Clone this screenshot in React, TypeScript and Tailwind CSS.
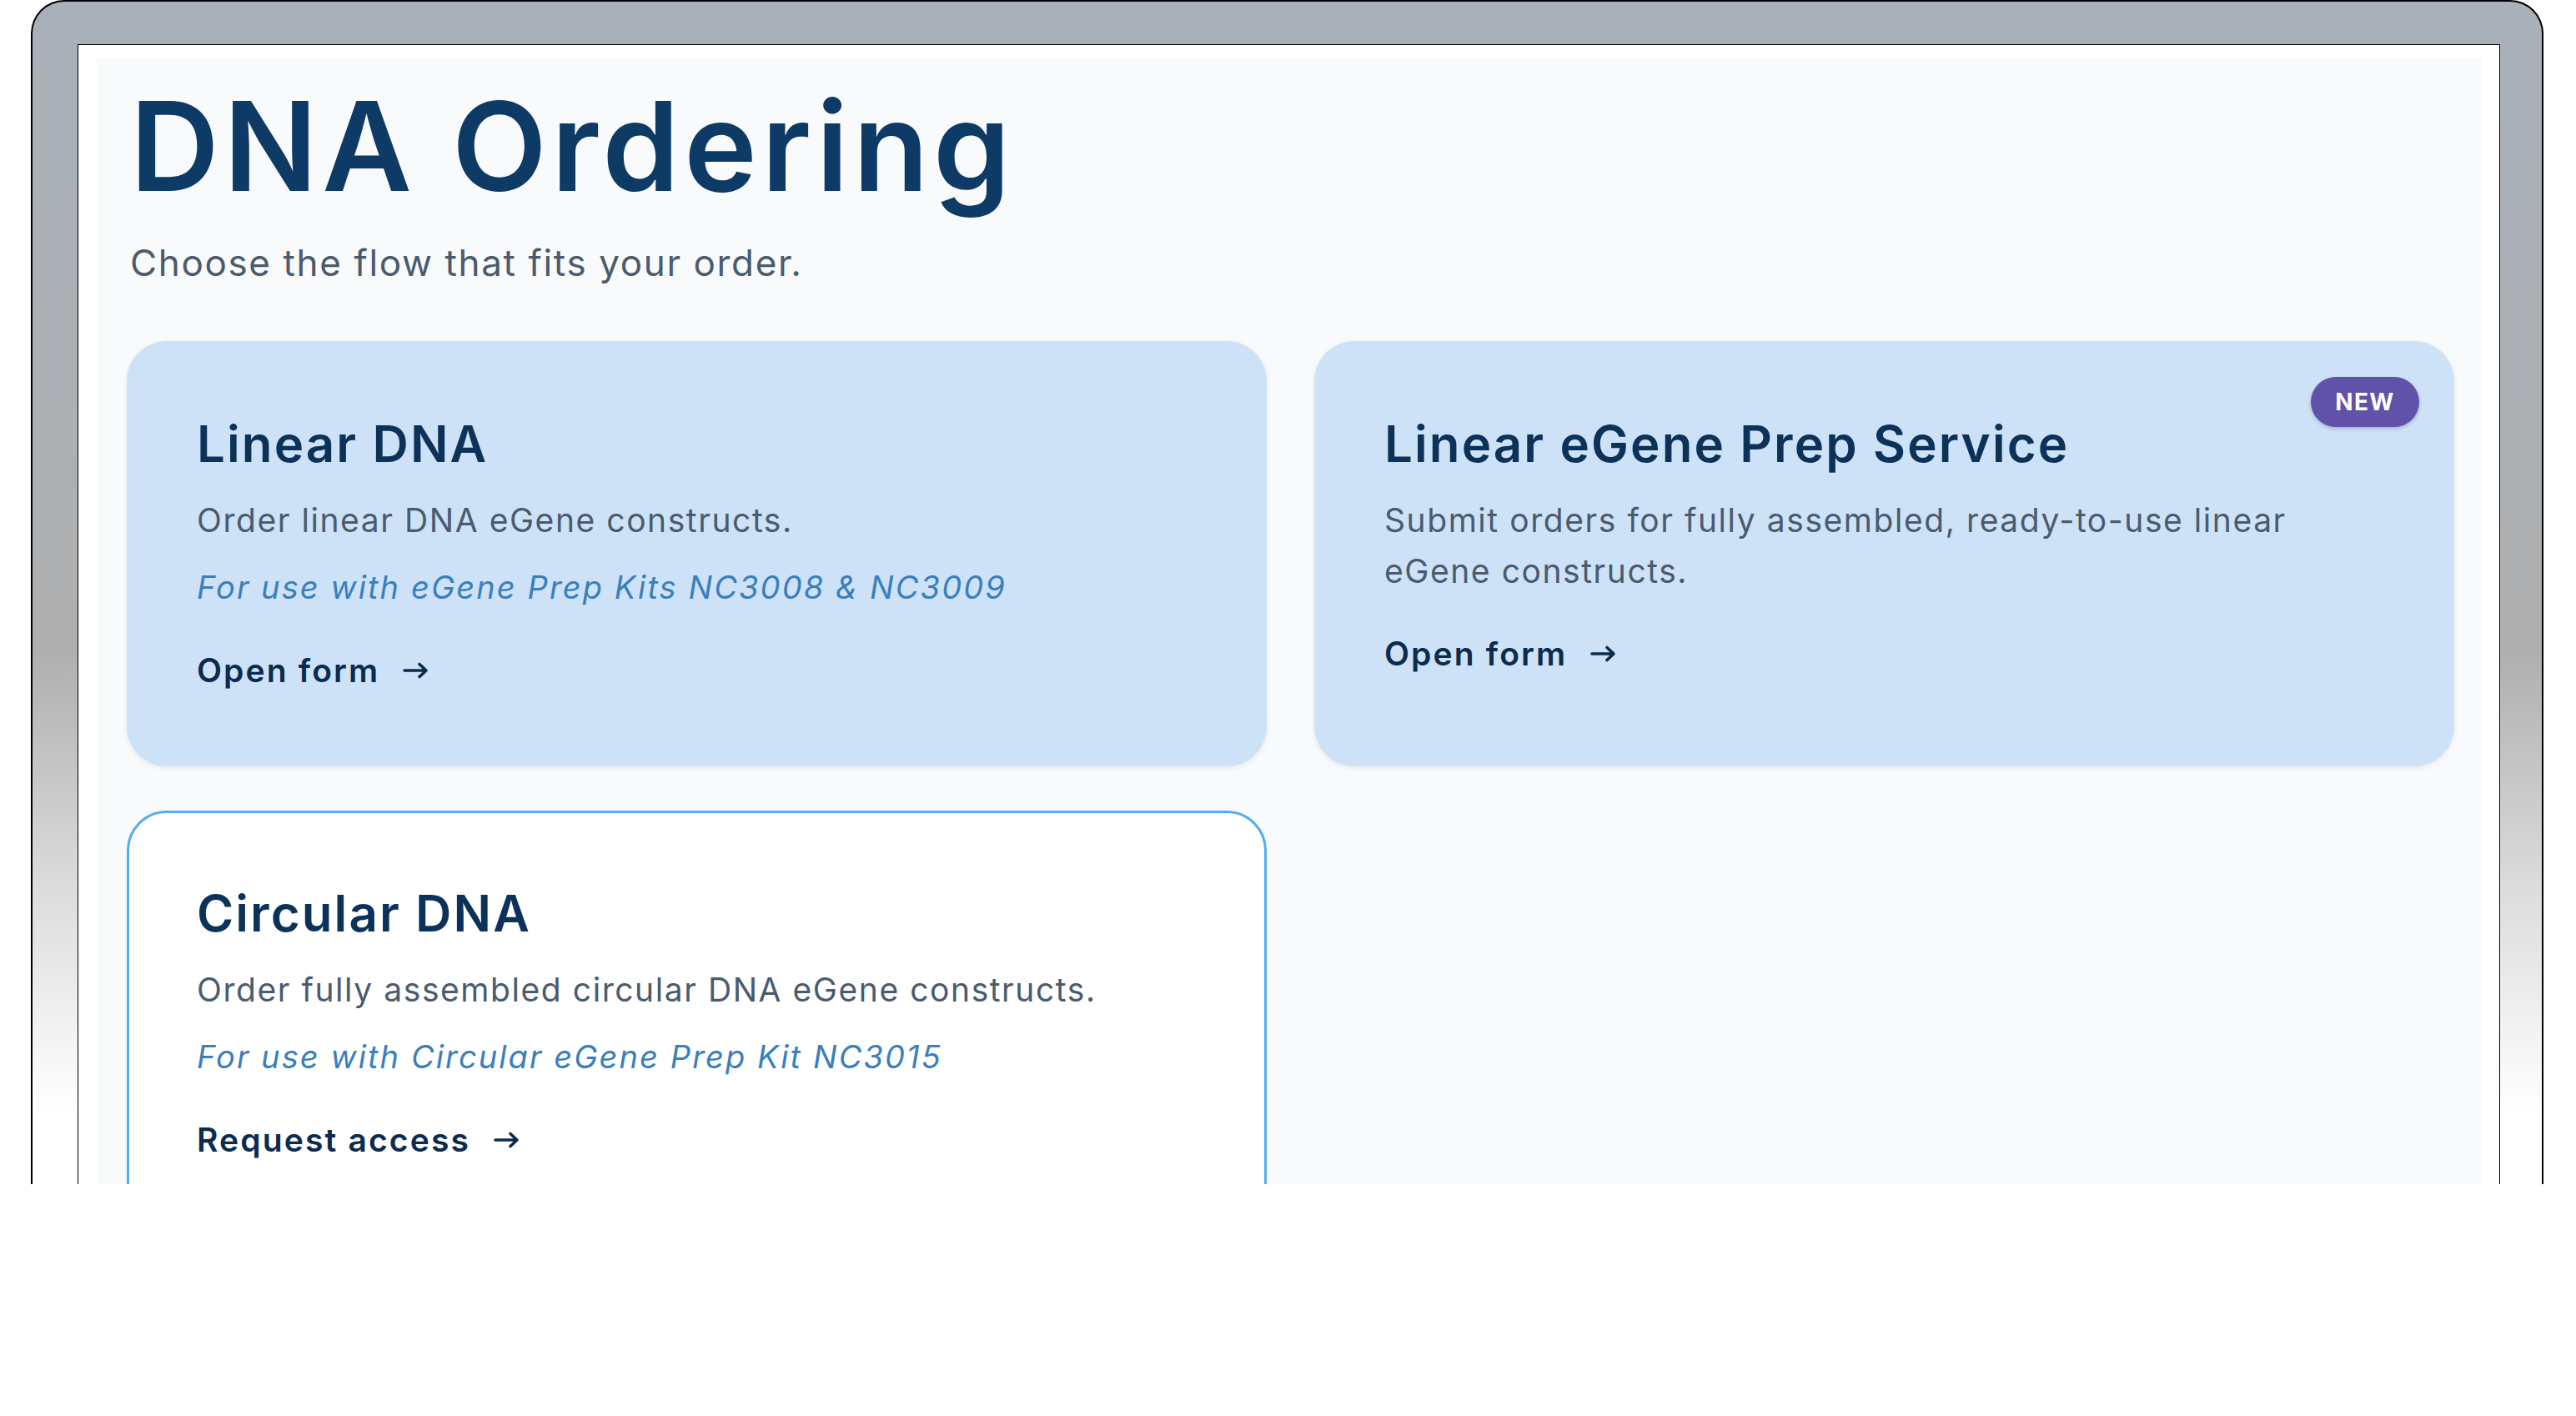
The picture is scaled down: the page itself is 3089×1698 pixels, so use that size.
import type { ReactNode } from "react";

type Flow = {
  title: string;
  description: string;
  note?: string;
  action: string;
  badge?: string;
  outlined?: boolean;
};

const flows: Flow[] = [
  {
    title: "Linear DNA",
    description: "Order linear DNA eGene constructs.",
    note: "For use with eGene Prep Kits NC3008 & NC3009",
    action: "Open form",
  },
  {
    title: "Linear eGene Prep Service",
    description: "Submit orders for fully assembled, ready-to-use linear eGene constructs.",
    action: "Open form",
    badge: "NEW",
  },
  {
    title: "Circular DNA",
    description: "Order fully assembled circular DNA eGene constructs.",
    note: "For use with Circular eGene Prep Kit NC3015",
    action: "Request access",
    outlined: true,
  },
];

function Arrow() {
  return (
    <svg width="32" height="22" viewBox="0 0 32 22" fill="none" className="shrink-0">
      <path
        d="M2 11H28M20 3.5L28 11L20 18.5"
        stroke="currentColor"
        strokeWidth="3.6"
        strokeLinecap="round"
        strokeLinejoin="round"
      />
    </svg>
  );
}

function FlowCard({ flow }: { flow: Flow }) {
  return (
    <div
      className={
        flow.outlined
          ? "relative rounded-[48px] border-[3px] border-[#55adf1] bg-white pt-[84px] pr-[80px] pb-[88px] pl-[81px]"
          : "relative rounded-[48px] border-[3px] border-transparent bg-[#cde2f6] pt-[84px] pr-[80px] pb-[88px] pl-[81px] shadow-[0_2px_6px_rgba(15,40,80,0.08)]"
      }
    >
      {flow.badge && (
        <span className="absolute top-[40px] right-[39px] flex h-[60px] w-[130px] items-center justify-center rounded-full bg-[#6052a8] text-[28px] font-bold tracking-[0.05em] text-white shadow-[0_2px_4px_rgba(40,30,100,0.25)]">
          {flow.badge}
        </span>
      )}
      <h2 className="text-[60px] leading-[72px] font-semibold tracking-[0.035em] text-[#0c3259]">
        {flow.title}
      </h2>
      <p className="mt-[25px] max-w-[1180px] text-[39px] leading-[61px] tracking-[0.04em] text-[#4a5b6e]">
        {flow.description}
      </p>
      {flow.note && (
        <p className="mt-[20px] text-[38px] leading-[61px] italic tracking-[0.055em] text-[#3a7fbc]">
          {flow.note}
        </p>
      )}
      <Action>{flow.action}</Action>
    </div>
  );
}

function Action({ children }: { children: ReactNode }) {
  return (
    <a className="mt-[45px] flex h-[48px] items-center gap-[28px] text-[39px] leading-[48px] font-semibold tracking-[0.055em] text-[#0b2c4f]">
      {children}
      <Arrow />
    </a>
  );
}

export default function App() {
  return (
    <div
      className="h-[1698px] w-full overflow-hidden bg-white"
      style={{ fontFamily: "Inter, 'Noto Sans', 'Liberation Sans', sans-serif" }}
    >
      {/* device frame, cut off at the bottom */}
      <div className="ml-[37px] h-[1420px] w-[3013px] overflow-hidden rounded-t-[40px] border-2 border-b-0 border-black bg-[linear-gradient(180deg,#a8b0b9_0%,#adb0b3_40%,#afafaf_55%,#dcdcdc_75%,#ffffff_94%)] pt-[51px] pr-[50px] pl-[54px]">
        <div className="h-full border border-b-0 border-black bg-white px-[22px] pt-[15px]">
          <main className="h-full bg-[#f8fafc] pt-[34px] pr-[32px] pl-[36px]">
            <h1 className="pl-[4px] text-[148px] leading-[146px] font-semibold tracking-[0.037em] text-[#0e3a66]">
              DNA Ordering
            </h1>
            <p className="mt-[40px] pl-[4px] text-[44px] leading-[53px] tracking-[0.037em] text-[#4b5b6c]">
              Choose the flow that fits your order.
            </p>
            <div className="mt-[67px] grid grid-cols-2 gap-x-[57px] gap-y-[53px]">
              {flows.map((f) => (
                <FlowCard key={f.title} flow={f} />
              ))}
            </div>
          </main>
        </div>
      </div>
    </div>
  );
}
